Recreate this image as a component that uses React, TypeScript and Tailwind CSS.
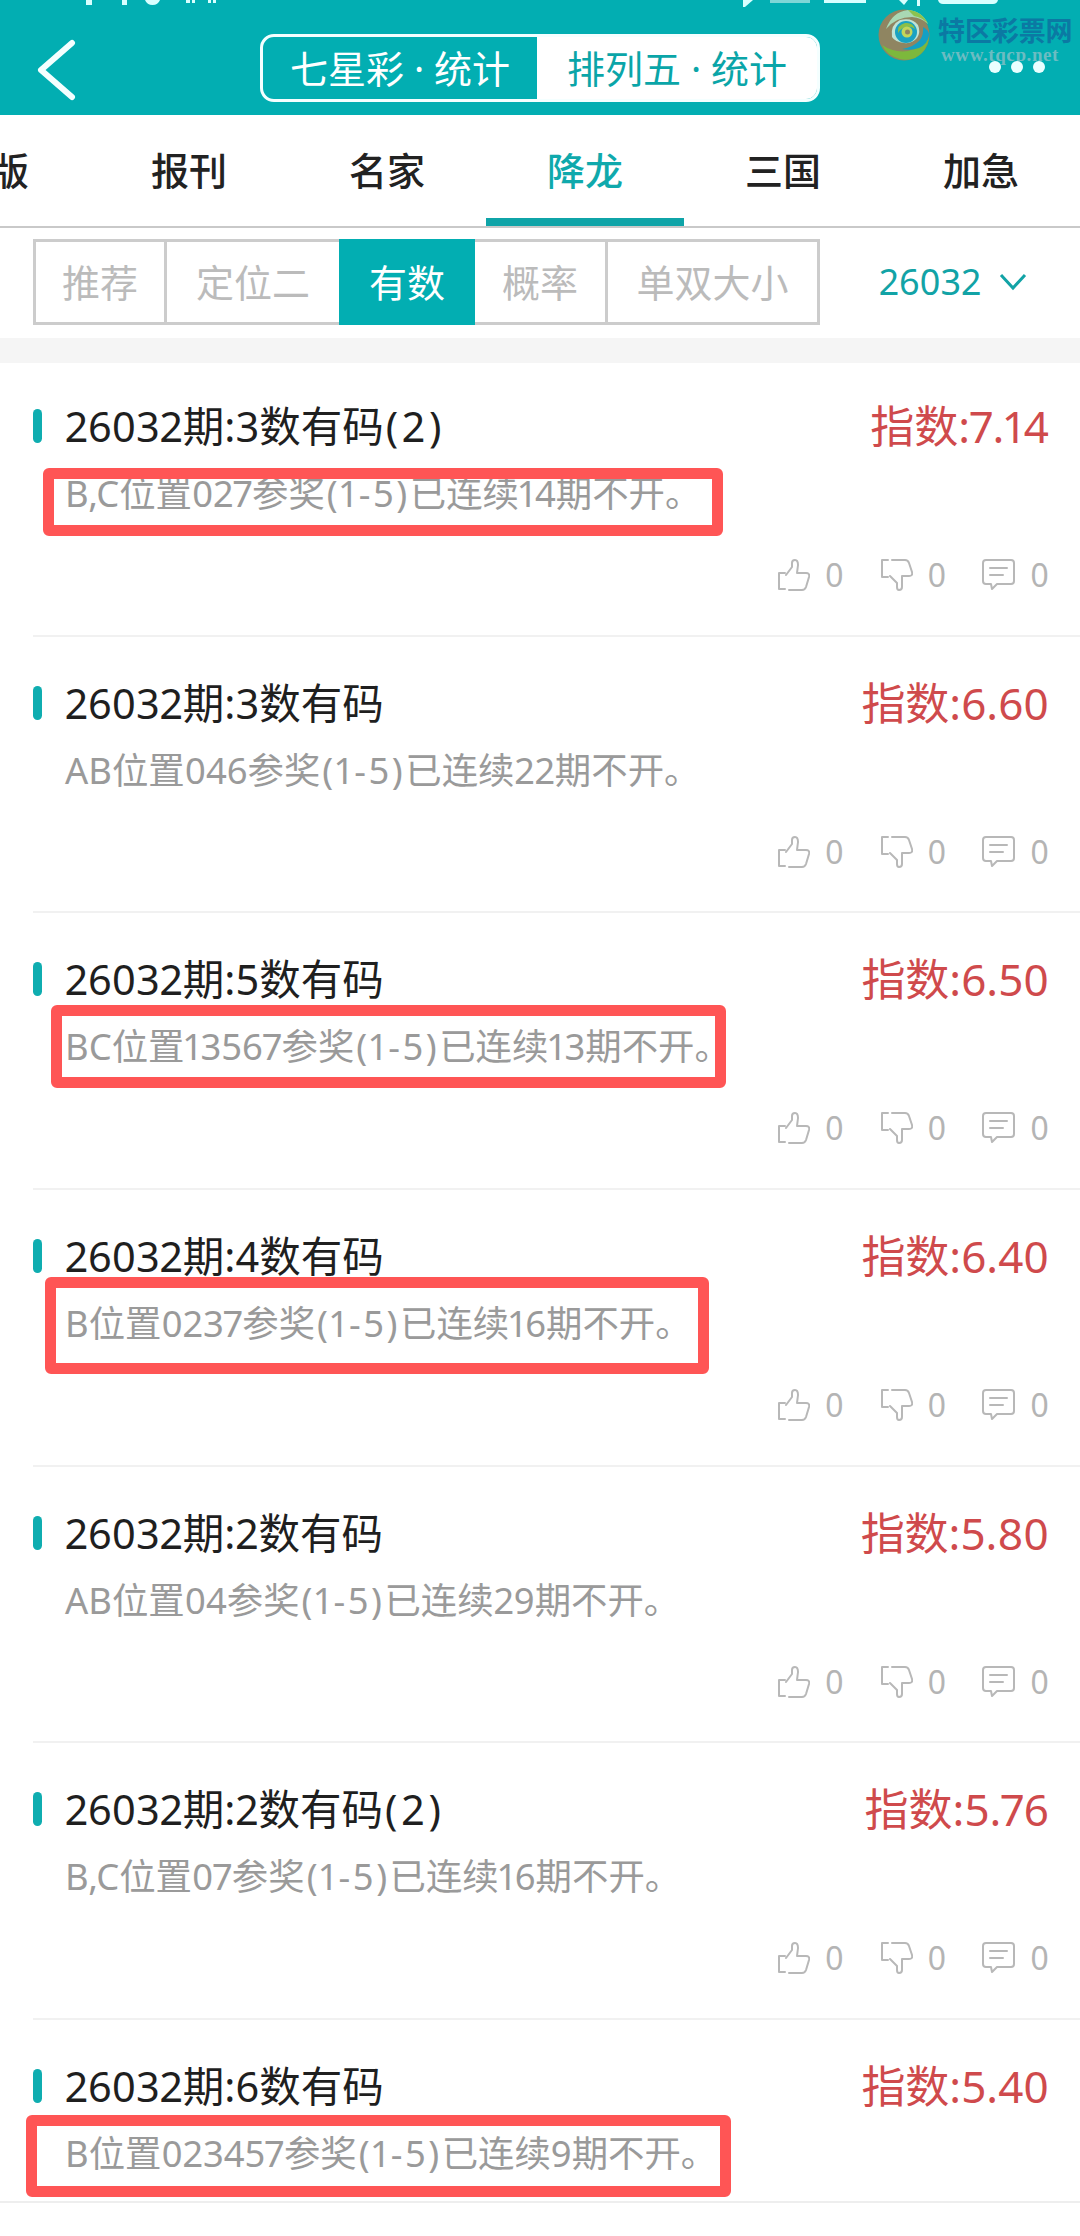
const font = "font-['Noto_Sans','Noto_Sans_CJK_SC',sans-serif]";

const rows = [
  { title: '26032期:3数有码', suffix: '(2)', before: 'B,C位置027参奖', after: '已连续14期不开。', score: '7.14', box: 'left-[43px] top-[108px] h-[68px] w-[680px]' },
  { title: '26032期:3数有码', before: 'AB位置046参奖', after: '已连续22期不开。', score: '6.60' },
  { title: '26032期:5数有码', before: 'BC位置13567参奖', after: '已连续13期不开。', score: '6.50', box: 'left-[51px] top-[92px] h-[83px] w-[675px]' },
  { title: '26032期:4数有码', before: 'B位置0237参奖', after: '已连续16期不开。', score: '6.40', box: 'left-[45px] top-[87px] h-[97px] w-[664px]' },
  { title: '26032期:2数有码', before: 'AB位置04参奖', after: '已连续29期不开。', score: '5.80' },
  { title: '26032期:2数有码', suffix: '(2)', before: 'B,C位置07参奖', after: '已连续16期不开。', score: '5.76' },
  { title: '26032期:6数有码', before: 'B位置023457参奖', after: '已连续9期不开。', score: '5.40', box: 'left-[26px] top-[95px] h-[82px] w-[705px]' },
];

const tabs = ['图版', '报刊', '名家', '降龙', '三国', '加急'];

function ThumbUp() {
  return (
    <svg width="33" height="32" viewBox="0 0 33 32" fill="none" stroke="#b8b8b8" strokeWidth="2" strokeLinejoin="round" strokeLinecap="round">
      <path d="M8 14H2v16h6" />
      <path d="M12 31h13q3 0 4-3l3-10q1-4-3-4h-9l1-8q0-5-3-5-3 0-3 3v4l-6 8" />
    </svg>
  );
}

function ThumbDown() {
  return (
    <svg width="33" height="32" viewBox="0 0 33 32" fill="none" stroke="#b8b8b8" strokeWidth="2" strokeLinejoin="round" strokeLinecap="round">
      <path d="M8 18H2V1h6" />
      <path d="M12 1h13q3 0 4 3l3 9q1 4-3 4h-7v11q0 3-3 3-2 0-2-3v-4l-7-7" />
    </svg>
  );
}

function Comment() {
  return (
    <svg width="33" height="32" viewBox="0 0 33 32" fill="none" stroke="#b8b8b8" strokeWidth="2" strokeLinejoin="round" strokeLinecap="round">
      <path d="M4 1h25q3 0 3 3v18q0 3-3 3H15l-5 5-1-5H4q-3 0-3-3V4q0-3 3-3z" />
      <path d="M8 9h17M8 16h13" />
    </svg>
  );
}

// swirl mark of the watermark
function Logo() {
  return (
    <svg width="52" height="52" viewBox="0 0 52 52">
      <circle cx="26" cy="26" r="25.500" fill="#8f8561" />
      <path d="M8 20Q14 3 30 1q14 1 20 14-6-6-16-7Q18 8 8 20z" fill="#a9d8b4" />
      <path d="M30 1q14 1 20 14-6-7-14-8z" fill="#8cc24f" />
      <path d="M4 36q12 8 26 6 14-3 21-14-2 15-14 21-8 3-15 1Q9 47 4 36z" fill="#7db83c" />
      <path d="M51 26q-1 9-10 13-8 3-17 1 12-2 18-9 4-6 3-13 6 3 6 8z" fill="#12a0c4" />
      <path d="M14 28q-2-12 8-17 12-3 18 5 3 7-1 13-5 6-13 5-9-1-12-6z" fill="#bfe3d6" />
      <circle cx="28" cy="23" r="11" fill="#1aa2c2" />
      <path d="M20 24q-1-8 7-10 8-1 10 6-4-3-9-2-5 1-8 6z" fill="#8bbf47" />
      <circle cx="29" cy="23" r="5.500" fill="#c3d65a" />
      <circle cx="29.500" cy="23" r="2.500" fill="#8f8561" />
    </svg>
  );
}

function StatusBits() {
  return (
    <svg width="1080" height="8" viewBox="0 0 1080 8" className="block">
      <g fill="#d8ffff">
        <rect x="86" y="0" width="6" height="5" />
        <rect x="122" y="0" width="5" height="5" />
        <path d="M145 0h15q-2 5-7.500 5T145 0z" />
        <rect x="186" y="0" width="4" height="3" />
        <rect x="192" y="0" width="3" height="3" />
        <rect x="208" y="0" width="3" height="3" />
        <rect x="213" y="0" width="3" height="3" />
        <path d="M743 0h10l-8 7-2 0z" />
        <rect x="824" y="0" width="42" height="3" />
        <path d="M899 0h9l-4 5z" />
        <rect x="917" y="0" width="3" height="6" />
        <path d="M938 0h60q-1 4-5 4h-50q-4 0-5-4z" />
      </g>
      <rect x="770" y="0" width="40" height="3" fill="#7fd6d6" />
    </svg>
  );
}

export default function App() {
  return (
    <div className={`${font} relative h-[2236px] w-[1080px] overflow-hidden bg-white proportional-nums`}>
      {/* Header */}
      <div className="relative h-[115px] bg-[#02aeb2]">
        <StatusBits />
        <div className="flex items-start">
          <svg width="44" height="62" viewBox="0 0 44 62" fill="none" stroke="#f4ffff" strokeWidth="6" strokeLinecap="round" strokeLinejoin="round" className="ml-[35px] mt-[31px]">
            <path d="M37 4 6 31l31 27" />
          </svg>
          <div className="ml-[181px] mt-[26px] flex h-[68px] w-[560px] overflow-hidden rounded-[14px] border-[3px] border-[#f4ffff] text-[38px]">
            <div className="flex w-[274px] items-center justify-center text-white">七星彩 · 统计</div>
            <div className="flex flex-1 items-center justify-center bg-white text-[#0aa5a8]">排列五 · 统计</div>
          </div>
        </div>
        <div className="absolute left-[878px] top-[9px]">
          <Logo />
        </div>
        <div className="absolute left-[938px] top-[9px] text-[27px] font-bold leading-[44px] tracking-[-0.1px] text-[#0b79a3]">特区彩票网</div>
        <div className="absolute left-[941px] top-[44px] font-['Liberation_Serif',serif] text-[19px] font-bold leading-[22px] tracking-[0.6px] text-[#6cbcc2]">www.tqcp.net</div>
        <div className="absolute left-[989px] top-[61px] flex gap-[10px]">
          <div className="size-[12px] rounded-full bg-[#eaffff]" />
          <div className="size-[12px] rounded-full bg-[#eaffff]" />
          <div className="size-[12px] rounded-full bg-[#eaffff]" />
        </div>
      </div>

      {/* Tabs */}
      <div className="flex h-[113px] overflow-hidden border-b-2 border-[#c9c9c9]">
        <div className="ml-[-108px] flex">
          {tabs.map((t) => (
            <div
              key={t}
              className={`relative flex h-[111px] w-[198px] items-center justify-center pb-px text-[38px] font-medium ${t === '降龙' ? 'text-[#0fa9ac]' : 'text-[#222222]'}`}
            >
              {t}
              {t === '降龙' && <div className="absolute bottom-0 left-0 right-0 h-[8px] bg-[#0fa4a8]" />}
            </div>
          ))}
        </div>
      </div>

      {/* Sub tabs */}
      <div className="flex h-[110px] items-start bg-white pl-[33px] pt-[11px]">
        <div className="flex h-[86px] w-[787px] border-[3px] border-[#cccccc] text-[38px] text-[#bbbbbb]">
          <div className="flex w-[131px] items-center justify-center border-r-[3px] border-[#cccccc]">推荐</div>
          <div className="flex w-[172px] items-center justify-center">定位二</div>
          <div className="my-[-3px] flex w-[136px] items-center justify-center bg-[#02aeb2] text-white">有数</div>
          <div className="flex w-[133px] items-center justify-center border-r-[3px] border-[#cccccc]">概率</div>
          <div className="flex flex-1 items-center justify-center">单双大小</div>
        </div>
        <div className="ml-[59px] flex h-[86px] items-center text-[36px] text-[#12a3a6]">
          26032
          <svg width="28" height="18" viewBox="0 0 28 18" fill="none" stroke="#12a3a6" strokeWidth="3" className="ml-[18px]">
            <path d="M2 2l12 13L26 2" />
          </svg>
        </div>
      </div>
      <div className="mb-[-3px] h-[25px] bg-[#f5f5f5]" />

      {/* Rows */}
      {rows.map((r, i) => {
        const last = i === rows.length - 1;
        return (
          <div key={i} className={last ? 'relative h-[183px] border-b-2 border-[#eeeeee]' : 'relative h-[276.67px]'}>
            <div className="flex items-center pl-[33px] pr-[31px] pt-[44px]">
              <div className="h-[34px] w-[9px] rounded-full bg-[#0fadb0]" />
              <div className="ml-[23px] flex-1 text-[41.5px] leading-[44px] text-[#1f1f1f]">
                {r.title}
                {r.suffix && <span className="ml-[2px] tracking-[4px]">{r.suffix}</span>}
              </div>
              <div className="text-[44px] leading-[44px] text-[#cf4a4c]">指数:{r.score}</div>
            </div>
            <div className="mt-[23px] pl-[65px] text-[36.4px] leading-[44px] text-[#9a9a9a]">
              {r.before}
              <span className="ml-[2px] tracking-[2.5px]">(1-5)</span>
              {r.after}
            </div>
            {!last && (
              <div className="mt-[40px] flex h-[40px] items-center justify-end gap-[36px] pr-[31px] text-[32px] text-[#b4b4b4]">
                <div className="flex items-center gap-[15px]">
                  <ThumbUp />
                  <span>0</span>
                </div>
                <div className="flex items-center gap-[15px]">
                  <ThumbDown />
                  <span>0</span>
                </div>
                <div className="flex items-center gap-[15px]">
                  <Comment />
                  <span>0</span>
                </div>
              </div>
            )}
            {!last && <div className="absolute bottom-0 left-[33px] right-0 h-[2px] bg-[#f1f1f1]" />}
            {r.box && <div className={`absolute rounded-[6px] border-[11px] border-[#ff5555] ${r.box}`} />}
          </div>
        );
      })}
    </div>
  );
}
